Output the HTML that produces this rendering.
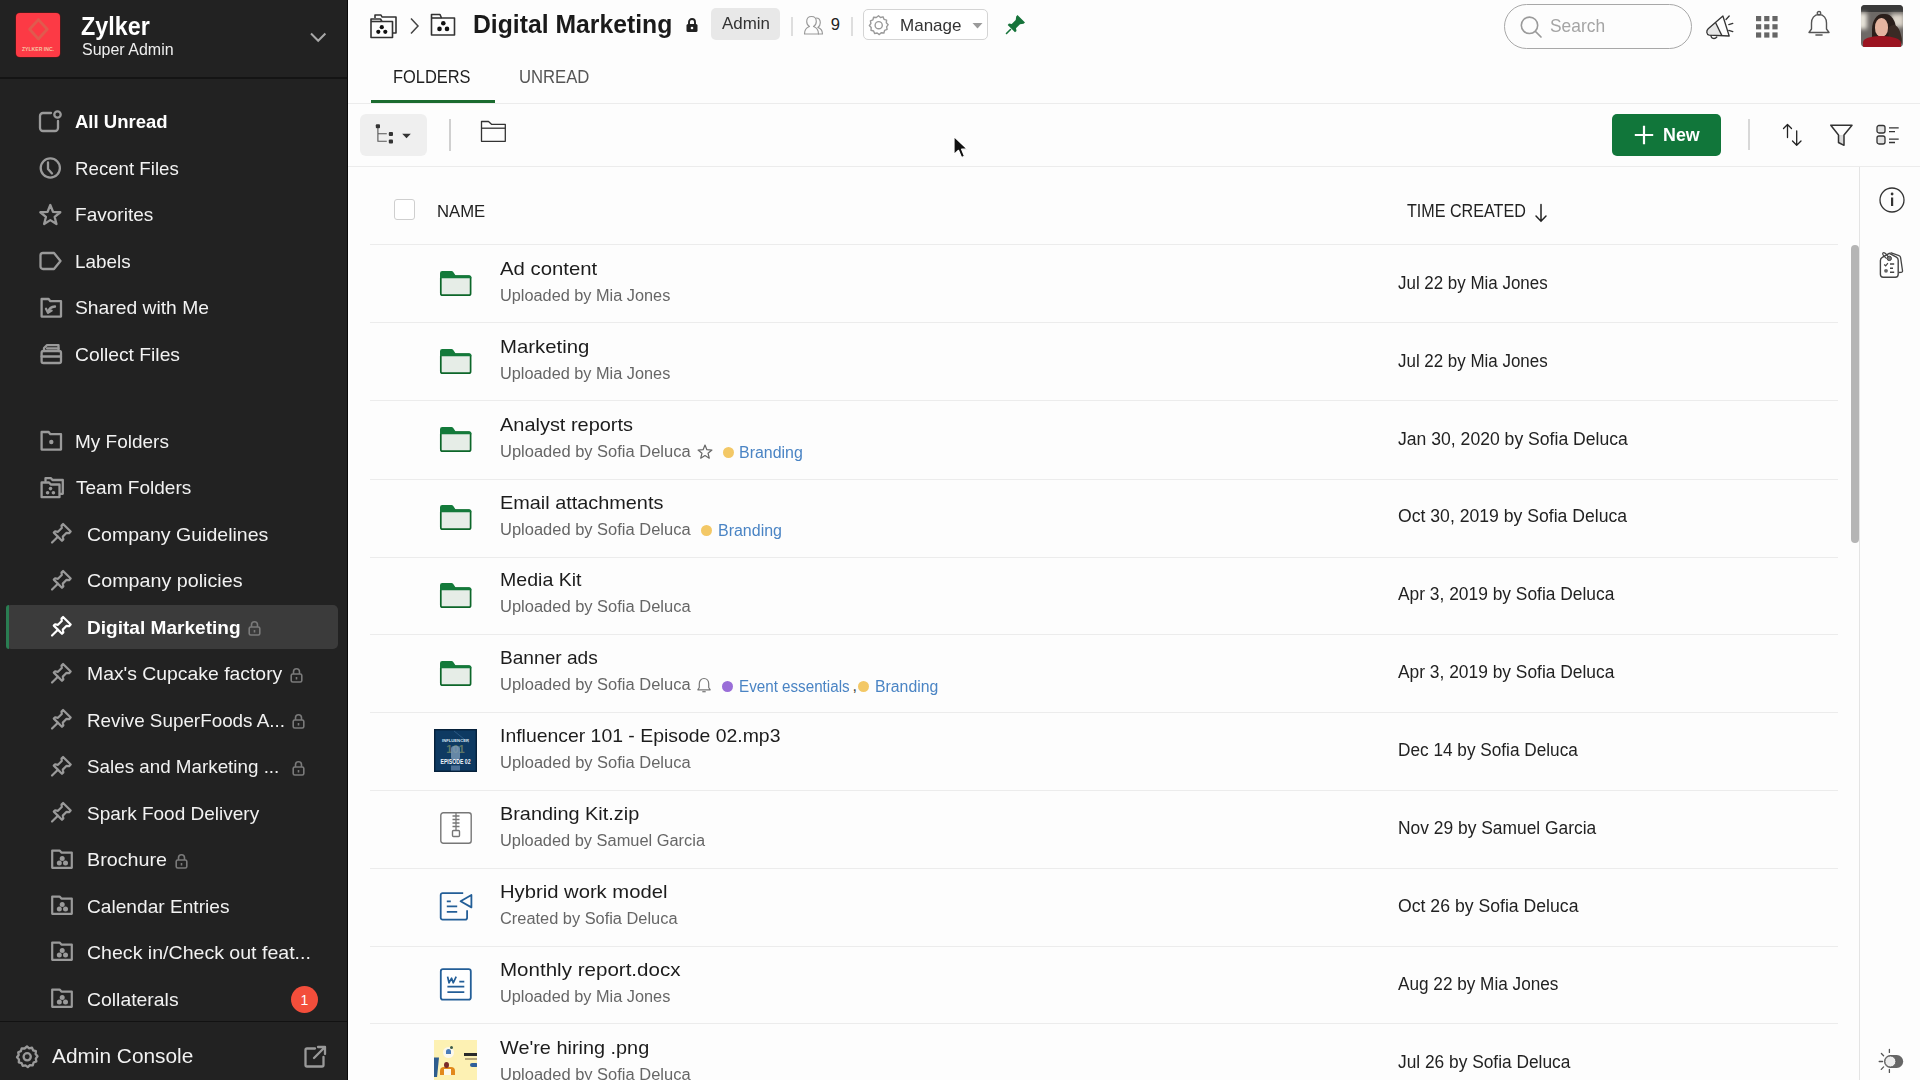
<!DOCTYPE html>
<html><head><meta charset="utf-8"><title>WorkDrive</title>
<style>
html,body{margin:0;padding:0;width:1920px;height:1080px;overflow:hidden;background:#fdfdfd;font-family:"Liberation Sans", sans-serif;}
.t{position:absolute;white-space:nowrap;line-height:1;font-family:"Liberation Sans", sans-serif;}
svg{overflow:visible}
</style></head><body>
<div style="position:absolute;left:0px;top:0px;width:347px;height:1080px;background:#222222"></div>
<div style="position:absolute;left:347px;top:0px;width:1px;height:1080px;background:#0a0a0a"></div>
<div style="position:absolute;left:16px;top:13px;width:44px;height:44px;background:#fc3a45;border-radius:4px;box-shadow:0 0 0 0.6px #6a1416"></div>
<svg style="position:absolute;left:16px;top:13px;" width="44" height="44" viewBox="0 0 44 44" fill="none"><path d="M22.4 6.6 L31.2 16.2 L22.4 26 L13.6 16.2 Z" stroke="#e05a4e" stroke-width="2.8" stroke-linejoin="round"/><text x="22" y="38" font-family="Liberation Sans" font-size="5.8" font-weight="700" fill="#f6c4a4" text-anchor="middle" textLength="32" lengthAdjust="spacingAndGlyphs">ZYLKER INC.</text></svg>
<div class="t" style="left:81.25px;top:13.65px;font-size:25px;font-weight:700;color:#ffffff;transform:scaleX(0.9330);transform-origin:0 0;">Zylker</div>
<div class="t" style="left:81.80px;top:41.77px;font-size:15.8px;font-weight:400;color:#eeeeee;transform:scaleX(1.0127);transform-origin:0 0;">Super Admin</div>
<svg style="position:absolute;left:307.5px;top:31px;" width="20" height="14" viewBox="0 0 20 14" fill="none"><path d="M3 2.5 L10.2 9.8 L17.4 2.5" stroke="#a8a8a8" stroke-width="2"/></svg>
<div style="position:absolute;left:0px;top:77px;width:347px;height:2px;background:#141414"></div>
<div style="position:absolute;left:6px;top:605px;width:332px;height:44px;background:#3b3b3b;border-radius:5px"></div>
<div style="position:absolute;left:6px;top:605px;width:3px;height:44px;background:#2a7d52;border-radius:5px 0 0 5px"></div>
<svg style="position:absolute;left:38px;top:110.30000000000001px;" width="26" height="24" viewBox="0 0 26 24" fill="none"><path d="M13 3 H5 a3 3 0 0 0 -3 3 V18 a3 3 0 0 0 3 3 H17 a3 3 0 0 0 3 -3 V11" stroke="#9a9a9a" stroke-width="2.3" stroke-linecap="round" stroke-linejoin="round"/><circle cx="19.5" cy="4.5" r="3.2" stroke="#9a9a9a" stroke-width="2.3" stroke-linecap="round" stroke-linejoin="round"/></svg>
<div class="t" style="left:75.40px;top:112.15px;font-size:19px;font-weight:700;color:#ffffff;transform:scaleX(0.9737);transform-origin:0 0;">All Unread</div>
<svg style="position:absolute;left:38px;top:156px;" width="26" height="24" viewBox="0 0 26 24" fill="none"><circle cx="12.3" cy="12" r="9.6" stroke="#9a9a9a" stroke-width="2.3" stroke-linecap="round" stroke-linejoin="round"/><path d="M10 6.5 V13 L14 17.5" stroke="#9a9a9a" stroke-width="2.3" stroke-linecap="round" stroke-linejoin="round"/></svg>
<div class="t" style="left:75.40px;top:158.85px;font-size:19px;font-weight:400;color:#f2f2f2;transform:scaleX(0.9830);transform-origin:0 0;">Recent Files</div>
<svg style="position:absolute;left:38px;top:202.5px;" width="26" height="24" viewBox="0 0 26 24" fill="none"><polygon points="12.30,2.00 15.00,8.78 22.29,9.26 16.67,13.92 18.47,20.99 12.30,17.10 6.13,20.99 7.93,13.92 2.31,9.26 9.60,8.78" stroke="#9a9a9a" stroke-width="2.3" stroke-linecap="round" stroke-linejoin="round"/></svg>
<div class="t" style="left:75.00px;top:205.35px;font-size:19px;font-weight:400;color:#f2f2f2;transform:scaleX(1.0021);transform-origin:0 0;">Favorites</div>
<svg style="position:absolute;left:38px;top:249px;" width="26" height="24" viewBox="0 0 26 24" fill="none"><path d="M5 4 H16 L22.5 12 L16 20 H5 a2.5 2.5 0 0 1 -2.5 -2.5 V6.5 A2.5 2.5 0 0 1 5 4 Z" stroke="#9a9a9a" stroke-width="2.3" stroke-linecap="round" stroke-linejoin="round"/></svg>
<div class="t" style="left:75.00px;top:251.85px;font-size:19px;font-weight:400;color:#f2f2f2;transform:scaleX(0.9928);transform-origin:0 0;">Labels</div>
<svg style="position:absolute;left:38.5px;top:295.5px;" width="26" height="24" viewBox="0 0 26 24" fill="none"><path d="M2.6 3 H9.6 L11.4 5.2 H22 V20.6 H2.6 Z" stroke="#9a9a9a" stroke-width="2.3" stroke-linecap="round" stroke-linejoin="round"/><path d="M16 10.5 C12 10.8 10 12.5 9.2 16" stroke="#9a9a9a" stroke-width="2.3" stroke-linecap="round" stroke-linejoin="round"/><path d="M7 12.8 L9 16.8 L12.6 14.6" stroke="#9a9a9a" stroke-width="2.3" stroke-linecap="round" stroke-linejoin="round"/></svg>
<div class="t" style="left:75.00px;top:298.35px;font-size:19px;font-weight:400;color:#f2f2f2;transform:scaleX(1.0144);transform-origin:0 0;">Shared with Me</div>
<svg style="position:absolute;left:38.5px;top:342px;" width="26" height="24" viewBox="0 0 26 24" fill="none"><rect x="2.6" y="9" width="19.4" height="12" rx="1.8" stroke="#9a9a9a" stroke-width="2.3" stroke-linecap="round" stroke-linejoin="round"/><path d="M2.6 14.5 H22" stroke="#9a9a9a" stroke-width="2.3" stroke-linecap="round" stroke-linejoin="round"/><path d="M5 9 V6 L8 3.2 H19.5 V9" stroke="#9a9a9a" stroke-width="2.3" stroke-linecap="round" stroke-linejoin="round"/><path d="M8 6.3 H19.5" stroke="#9a9a9a" stroke-width="2.3" stroke-linecap="round" stroke-linejoin="round"/></svg>
<div class="t" style="left:75.00px;top:344.85px;font-size:19px;font-weight:400;color:#f2f2f2;transform:scaleX(1.0149);transform-origin:0 0;">Collect Files</div>
<svg style="position:absolute;left:38.5px;top:429px;" width="26" height="24" viewBox="0 0 26 24" fill="none"><path d="M2.6 3 H9.6 L11.4 5.2 H22 V20.6 H2.6 Z" stroke="#9a9a9a" stroke-width="2.3" stroke-linecap="round" stroke-linejoin="round"/><circle cx="12.3" cy="13" r="2.2" fill="#9a9a9a"/></svg>
<div class="t" style="left:75.00px;top:431.85px;font-size:19px;font-weight:400;color:#f2f2f2;transform:scaleX(0.9994);transform-origin:0 0;">My Folders</div>
<svg style="position:absolute;left:38.5px;top:475.5px;" width="28" height="24" viewBox="0 0 28 24" fill="none"><path d="M6.5 5 V2.2 H12 L13.5 4 H23.8 V17.8 H21" stroke="#9a9a9a" stroke-width="2.3" stroke-linecap="round" stroke-linejoin="round"/><path d="M2.6 6.5 H10 L11.8 8.5 H20.5 V21.2 H2.6 Z" stroke="#9a9a9a" stroke-width="2.3" stroke-linecap="round" stroke-linejoin="round"/><circle cx="11.5" cy="12.6" r="1.8" fill="#9a9a9a"/><circle cx="8.6" cy="16.8" r="1.8" fill="#9a9a9a"/><circle cx="14.4" cy="16.8" r="1.8" fill="#9a9a9a"/></svg>
<div class="t" style="left:75.80px;top:478.35px;font-size:19px;font-weight:400;color:#f2f2f2;transform:scaleX(1.0018);transform-origin:0 0;">Team Folders</div>
<svg style="position:absolute;left:50px;top:522px;" width="24" height="24" viewBox="0 0 24 24" fill="none"><polygon points="3.79,10.61 5.14,9.26 7.96,9.83 11.78,6.01 11.50,3.46 13.06,1.91 20.69,9.54 19.14,11.10 16.59,10.82 12.77,14.64 13.34,17.46 11.99,18.81" stroke="#9a9a9a" stroke-width="2.2" stroke-linecap="round" stroke-linejoin="round"/><path d="M2.02 20.58 L7.89 14.71" stroke="#9a9a9a" stroke-width="2.2" stroke-linecap="round" stroke-linejoin="round"/></svg>
<div class="t" style="left:86.70px;top:524.85px;font-size:19px;font-weight:400;color:#f2f2f2;transform:scaleX(1.0280);transform-origin:0 0;">Company Guidelines</div>
<svg style="position:absolute;left:50px;top:568.5px;" width="24" height="24" viewBox="0 0 24 24" fill="none"><polygon points="3.79,10.61 5.14,9.26 7.96,9.83 11.78,6.01 11.50,3.46 13.06,1.91 20.69,9.54 19.14,11.10 16.59,10.82 12.77,14.64 13.34,17.46 11.99,18.81" stroke="#9a9a9a" stroke-width="2.2" stroke-linecap="round" stroke-linejoin="round"/><path d="M2.02 20.58 L7.89 14.71" stroke="#9a9a9a" stroke-width="2.2" stroke-linecap="round" stroke-linejoin="round"/></svg>
<div class="t" style="left:86.70px;top:571.35px;font-size:19px;font-weight:400;color:#f2f2f2;transform:scaleX(1.0370);transform-origin:0 0;">Company policies</div>
<svg style="position:absolute;left:50px;top:615.3px;" width="24" height="24" viewBox="0 0 24 24" fill="none"><polygon points="3.79,10.61 5.14,9.26 7.96,9.83 11.78,6.01 11.50,3.46 13.06,1.91 20.69,9.54 19.14,11.10 16.59,10.82 12.77,14.64 13.34,17.46 11.99,18.81" stroke="#ffffff" stroke-width="2.2" stroke-linecap="round" stroke-linejoin="round"/><path d="M2.02 20.58 L7.89 14.71" stroke="#ffffff" stroke-width="2.2" stroke-linecap="round" stroke-linejoin="round"/></svg>
<div class="t" style="left:86.70px;top:618.15px;font-size:19px;font-weight:700;color:#ffffff;transform:scaleX(1.0033);transform-origin:0 0;">Digital Marketing</div>
<svg style="position:absolute;left:50px;top:661.5px;" width="24" height="24" viewBox="0 0 24 24" fill="none"><polygon points="3.79,10.61 5.14,9.26 7.96,9.83 11.78,6.01 11.50,3.46 13.06,1.91 20.69,9.54 19.14,11.10 16.59,10.82 12.77,14.64 13.34,17.46 11.99,18.81" stroke="#9a9a9a" stroke-width="2.2" stroke-linecap="round" stroke-linejoin="round"/><path d="M2.02 20.58 L7.89 14.71" stroke="#9a9a9a" stroke-width="2.2" stroke-linecap="round" stroke-linejoin="round"/></svg>
<div class="t" style="left:86.70px;top:664.35px;font-size:19px;font-weight:400;color:#f2f2f2;transform:scaleX(1.0192);transform-origin:0 0;">Max's Cupcake factory</div>
<svg style="position:absolute;left:50px;top:708px;" width="24" height="24" viewBox="0 0 24 24" fill="none"><polygon points="3.79,10.61 5.14,9.26 7.96,9.83 11.78,6.01 11.50,3.46 13.06,1.91 20.69,9.54 19.14,11.10 16.59,10.82 12.77,14.64 13.34,17.46 11.99,18.81" stroke="#9a9a9a" stroke-width="2.2" stroke-linecap="round" stroke-linejoin="round"/><path d="M2.02 20.58 L7.89 14.71" stroke="#9a9a9a" stroke-width="2.2" stroke-linecap="round" stroke-linejoin="round"/></svg>
<div class="t" style="left:86.70px;top:710.85px;font-size:19px;font-weight:400;color:#f2f2f2;transform:scaleX(0.9920);transform-origin:0 0;">Revive SuperFoods A...</div>
<svg style="position:absolute;left:50px;top:754.5px;" width="24" height="24" viewBox="0 0 24 24" fill="none"><polygon points="3.79,10.61 5.14,9.26 7.96,9.83 11.78,6.01 11.50,3.46 13.06,1.91 20.69,9.54 19.14,11.10 16.59,10.82 12.77,14.64 13.34,17.46 11.99,18.81" stroke="#9a9a9a" stroke-width="2.2" stroke-linecap="round" stroke-linejoin="round"/><path d="M2.02 20.58 L7.89 14.71" stroke="#9a9a9a" stroke-width="2.2" stroke-linecap="round" stroke-linejoin="round"/></svg>
<div class="t" style="left:86.70px;top:757.35px;font-size:19px;font-weight:400;color:#f2f2f2;transform:scaleX(0.9896);transform-origin:0 0;">Sales and Marketing ...</div>
<svg style="position:absolute;left:50px;top:801px;" width="24" height="24" viewBox="0 0 24 24" fill="none"><polygon points="3.79,10.61 5.14,9.26 7.96,9.83 11.78,6.01 11.50,3.46 13.06,1.91 20.69,9.54 19.14,11.10 16.59,10.82 12.77,14.64 13.34,17.46 11.99,18.81" stroke="#9a9a9a" stroke-width="2.2" stroke-linecap="round" stroke-linejoin="round"/><path d="M2.02 20.58 L7.89 14.71" stroke="#9a9a9a" stroke-width="2.2" stroke-linecap="round" stroke-linejoin="round"/></svg>
<div class="t" style="left:86.70px;top:803.85px;font-size:19px;font-weight:400;color:#f2f2f2;transform:scaleX(1.0003);transform-origin:0 0;">Spark Food Delivery</div>
<svg style="position:absolute;left:50px;top:847.5px;" width="26" height="24" viewBox="0 0 26 24" fill="none"><path d="M2.2 2.6 H9.6 L11.4 4.6 H21.8 V19.8 H2.2 Z" stroke="#9a9a9a" stroke-width="2.2" stroke-linejoin="round"/><circle cx="12.2" cy="10.4" r="2.5" fill="#9a9a9a"/><circle cx="9.3" cy="15" r="2.5" fill="#9a9a9a"/><circle cx="15.5" cy="15" r="2.5" fill="#9a9a9a"/></svg>
<div class="t" style="left:86.70px;top:850.35px;font-size:19px;font-weight:400;color:#f2f2f2;transform:scaleX(1.0377);transform-origin:0 0;">Brochure</div>
<svg style="position:absolute;left:50px;top:894px;" width="26" height="24" viewBox="0 0 26 24" fill="none"><path d="M2.2 2.6 H9.6 L11.4 4.6 H21.8 V19.8 H2.2 Z" stroke="#9a9a9a" stroke-width="2.2" stroke-linejoin="round"/><circle cx="12.2" cy="10.4" r="2.5" fill="#9a9a9a"/><circle cx="9.3" cy="15" r="2.5" fill="#9a9a9a"/><circle cx="15.5" cy="15" r="2.5" fill="#9a9a9a"/></svg>
<div class="t" style="left:86.70px;top:896.85px;font-size:19px;font-weight:400;color:#f2f2f2;transform:scaleX(1.0070);transform-origin:0 0;">Calendar Entries</div>
<svg style="position:absolute;left:50px;top:940.4px;" width="26" height="24" viewBox="0 0 26 24" fill="none"><path d="M2.2 2.6 H9.6 L11.4 4.6 H21.8 V19.8 H2.2 Z" stroke="#9a9a9a" stroke-width="2.2" stroke-linejoin="round"/><circle cx="12.2" cy="10.4" r="2.5" fill="#9a9a9a"/><circle cx="9.3" cy="15" r="2.5" fill="#9a9a9a"/><circle cx="15.5" cy="15" r="2.5" fill="#9a9a9a"/></svg>
<div class="t" style="left:86.70px;top:943.25px;font-size:19px;font-weight:400;color:#f2f2f2;transform:scaleX(1.0292);transform-origin:0 0;">Check in/Check out feat...</div>
<svg style="position:absolute;left:50px;top:986.7px;" width="26" height="24" viewBox="0 0 26 24" fill="none"><path d="M2.2 2.6 H9.6 L11.4 4.6 H21.8 V19.8 H2.2 Z" stroke="#9a9a9a" stroke-width="2.2" stroke-linejoin="round"/><circle cx="12.2" cy="10.4" r="2.5" fill="#9a9a9a"/><circle cx="9.3" cy="15" r="2.5" fill="#9a9a9a"/><circle cx="15.5" cy="15" r="2.5" fill="#9a9a9a"/></svg>
<div class="t" style="left:86.70px;top:989.55px;font-size:19px;font-weight:400;color:#f2f2f2;transform:scaleX(1.0203);transform-origin:0 0;">Collaterals</div>
<svg style="position:absolute;left:248px;top:619.5px;" width="13" height="16" viewBox="0 0 13 16" fill="none"><path d="M3.5 7 V4.8 a3 3 0 0 1 6 0 V7" stroke="#7a7a7a" stroke-width="1.6"/><rect x="1.2" y="7" width="10.6" height="8" rx="1.6" stroke="#7a7a7a" stroke-width="1.6"/><path d="M6.5 10 V12.5" stroke="#7a7a7a" stroke-width="1.6"/></svg>
<svg style="position:absolute;left:289.5px;top:666.5px;" width="13" height="16" viewBox="0 0 13 16" fill="none"><path d="M3.5 7 V4.8 a3 3 0 0 1 6 0 V7" stroke="#7a7a7a" stroke-width="1.6"/><rect x="1.2" y="7" width="10.6" height="8" rx="1.6" stroke="#7a7a7a" stroke-width="1.6"/><path d="M6.5 10 V12.5" stroke="#7a7a7a" stroke-width="1.6"/></svg>
<svg style="position:absolute;left:292px;top:713px;" width="13" height="16" viewBox="0 0 13 16" fill="none"><path d="M3.5 7 V4.8 a3 3 0 0 1 6 0 V7" stroke="#7a7a7a" stroke-width="1.6"/><rect x="1.2" y="7" width="10.6" height="8" rx="1.6" stroke="#7a7a7a" stroke-width="1.6"/><path d="M6.5 10 V12.5" stroke="#7a7a7a" stroke-width="1.6"/></svg>
<svg style="position:absolute;left:292px;top:759.5px;" width="13" height="16" viewBox="0 0 13 16" fill="none"><path d="M3.5 7 V4.8 a3 3 0 0 1 6 0 V7" stroke="#7a7a7a" stroke-width="1.6"/><rect x="1.2" y="7" width="10.6" height="8" rx="1.6" stroke="#7a7a7a" stroke-width="1.6"/><path d="M6.5 10 V12.5" stroke="#7a7a7a" stroke-width="1.6"/></svg>
<svg style="position:absolute;left:174.5px;top:852.5px;" width="13" height="16" viewBox="0 0 13 16" fill="none"><path d="M3.5 7 V4.8 a3 3 0 0 1 6 0 V7" stroke="#7a7a7a" stroke-width="1.6"/><rect x="1.2" y="7" width="10.6" height="8" rx="1.6" stroke="#7a7a7a" stroke-width="1.6"/><path d="M6.5 10 V12.5" stroke="#7a7a7a" stroke-width="1.6"/></svg>
<div style="position:absolute;left:291px;top:986px;width:27px;height:27px;background:#f34e3b;border-radius:50%"></div>
<div class="t" style="left:304.50px;top:993.10px;font-size:14px;font-weight:400;color:#ffffff;transform:translateX(-50%)">1</div>
<div style="position:absolute;left:0px;top:1021px;width:347px;height:1px;background:#121212"></div>
<svg style="position:absolute;left:14px;top:1044px;" width="26" height="26" viewBox="0 0 26 26" fill="none"><path d="M13 2.5 L15.2 4.3 L18 3.6 L19.1 6.3 L21.9 7.2 L21.6 10.1 L23.5 12.3 L21.8 14.6 L22.3 17.4 L19.6 18.5 L18.8 21.3 L15.9 21.1 L13.8 23.1 L11.5 21.4 L8.7 21.9 L7.6 19.2 L4.8 18.4 L5 15.5 L3 13.3 L4.7 11 L4.2 8.2 L6.9 7.1 L7.7 4.3 L10.6 4.5 Z" stroke="#9a9a9a" stroke-width="2.3" stroke-linecap="round" stroke-linejoin="round"/><circle cx="13.2" cy="12.8" r="3.6" stroke="#9a9a9a" stroke-width="2.3" stroke-linecap="round" stroke-linejoin="round"/></svg>
<div class="t" style="left:52.30px;top:1046.17px;font-size:20.5px;font-weight:400;color:#f2f2f2;transform:scaleX(1.0162);transform-origin:0 0;">Admin Console</div>
<svg style="position:absolute;left:302px;top:1044px;" width="26" height="26" viewBox="0 0 26 26" fill="none"><path d="M13 4.5 H5 a1.5 1.5 0 0 0 -1.5 1.5 V21 a1.5 1.5 0 0 0 1.5 1.5 H20 a1.5 1.5 0 0 0 1.5 -1.5 V13" stroke="#9a9a9a" stroke-width="2.3" stroke-linecap="round" stroke-linejoin="round"/><path d="M12 14 L23 3 M16 3 H23 V10" stroke="#9a9a9a" stroke-width="2.3" stroke-linecap="round" stroke-linejoin="round"/></svg>
<svg style="position:absolute;left:369px;top:13px;" width="30" height="27" viewBox="0 0 30 27" fill="none"><path d="M6 5 V2 H12 L13 4 H27 V20 H24" stroke="#333" stroke-width="1.6" stroke-linejoin="round"/><path d="M2 6 H11.5 L13 8.5 H23.5 V24.5 H2 Z" stroke="#333" stroke-width="1.6" stroke-linejoin="round"/><path d="M2 8.5 H12.5" stroke="#333" stroke-width="1.6" stroke-linejoin="round"/><circle cx="12.8" cy="14.2" r="2.1" fill="#111"/><circle cx="9.3" cy="18.8" r="2.1" fill="#111"/><circle cx="16.3" cy="18.8" r="2.1" fill="#111"/></svg>
<svg style="position:absolute;left:406px;top:15px;" width="16" height="22" viewBox="0 0 16 22" fill="none"><path d="M5 3.5 L12 11 L5 18.5" stroke="#444" stroke-width="1.5" fill="none"/></svg>
<svg style="position:absolute;left:429px;top:12px;" width="28" height="26" viewBox="0 0 28 26" fill="none"><path d="M2.5 2.5 V23 H25.5 V6 H12.5 L11 2.5 Z" stroke="#333" stroke-width="1.6" stroke-linejoin="round"/><path d="M2.5 6 H12.5" stroke="#333" stroke-width="1.6" stroke-linejoin="round"/><circle cx="14.3" cy="11.3" r="2.3" fill="#111"/><circle cx="10.5" cy="16.9" r="2.3" fill="#111"/><circle cx="18" cy="16.9" r="2.3" fill="#111"/></svg>
<div class="t" style="left:473.30px;top:12.05px;font-size:25px;font-weight:700;color:#1a1a1a;transform:scaleX(0.9894);transform-origin:0 0;">Digital Marketing</div>
<svg style="position:absolute;left:685px;top:17px;" width="14" height="16" viewBox="0 0 14 16" fill="none"><path d="M4 7 V5 a3 3 0 0 1 6 0 V7" stroke="#222" stroke-width="1.9" fill="none"/><rect x="1.5" y="7" width="11" height="8" rx="1.5" fill="#222"/><circle cx="7" cy="11" r="1.3" fill="#fff"/></svg>
<div style="position:absolute;left:711px;top:8px;width:69px;height:32px;background:#e8e8e8;border-radius:5px"></div>
<div class="t" style="left:722.00px;top:15.16px;font-size:16.4px;font-weight:400;color:#333;transform:scaleX(1.0324);transform-origin:0 0;">Admin</div>
<div style="position:absolute;left:791px;top:17px;width:1.5px;height:19px;background:#dedede"></div>
<svg style="position:absolute;left:802px;top:14px;" width="24" height="22" viewBox="0 0 24 22" fill="none"><path d="M11 20 H2.5 c0-4 2-6.5 5-7.5 c-1.8-1-2.8-2.8-2.8-5 c0-3 2-5 4.8-5 c2.8 0 4.8 2 4.8 5 c0 2.2-1 4-2.8 5 c3 1 5 3.5 5 7.5 Z" stroke="#999" stroke-width="1.15" fill="none" stroke-linejoin="round"/><path d="M14 4 c2.5 0 4.3 2 4.3 4.8 c0 2-0.9 3.6-2.4 4.6 c2.7 1 4.6 3.4 4.6 6.6 H16" stroke="#999" stroke-width="1.15" fill="none" stroke-linejoin="round"/></svg>
<div class="t" style="left:830.70px;top:17.49px;font-size:16.6px;font-weight:400;color:#222;">9</div>
<div style="position:absolute;left:851px;top:17px;width:1.5px;height:19px;background:#dedede"></div>
<div style="position:absolute;left:863px;top:9px;width:125px;height:31px;border:1px solid #d4d4d4;border-radius:5px;box-sizing:border-box;background:#fff"></div>
<svg style="position:absolute;left:867px;top:14px;" width="23" height="23" viewBox="0 0 23 23" fill="none"><path d="M11.5 1.8 L13.5 3.5 L16 2.8 L17 5.3 L19.6 6.1 L19.3 8.7 L21.2 10.7 L19.6 12.8 L20.1 15.4 L17.6 16.4 L16.9 19 L14.2 18.8 L12.3 20.6 L10.2 19 L7.6 19.5 L6.6 17 L4 16.3 L4.2 13.6 L2.3 11.6 L3.9 9.5 L3.4 6.9 L5.9 5.9 L6.6 3.3 L9.3 3.5 Z" stroke="#9a9a9a" stroke-width="1.4" fill="none" stroke-linejoin="round"/><circle cx="11.7" cy="11.2" r="3.6" stroke="#9a9a9a" stroke-width="1.4"/></svg>
<div class="t" style="left:899.70px;top:16.55px;font-size:17px;font-weight:400;color:#333;transform:scaleX(1.0007);transform-origin:0 0;">Manage</div>
<svg style="position:absolute;left:971px;top:22px;" width="13" height="8" viewBox="0 0 13 8" fill="none"><path d="M1.5 1 H11.5 L6.5 6.5 Z" fill="#9a9a9a"/></svg>
<svg style="position:absolute;left:1005px;top:14px;" width="21" height="20" viewBox="0 0 21 20" fill="none"><path d="M12.5 1 L20 8.5 L18.5 9.8 L15 10.3 L11 14.3 L11.5 17 L10 18.3 L2.7 11 L4 9.5 L6.7 10 L10.7 6 L11.2 2.5 Z" fill="#16733a"/><path d="M5.5 15.5 L1.5 19.5" stroke="#16733a" stroke-width="1.6" stroke-linecap="round"/></svg>
<div style="position:absolute;left:1504px;top:3.5px;width:187.5px;height:45px;border:1.4px solid #a8a8a8;border-radius:23px;box-sizing:border-box"></div>
<svg style="position:absolute;left:1518px;top:15px;" width="26" height="24" viewBox="0 0 26 24" fill="none"><circle cx="11.5" cy="10.3" r="8.2" stroke="#9a9a9a" stroke-width="1.6"/><path d="M17.5 16.5 L23 22" stroke="#9a9a9a" stroke-width="1.7" stroke-linecap="round"/></svg>
<div class="t" style="left:1550.30px;top:16.93px;font-size:18.2px;font-weight:400;color:#a5a5a5;transform:scaleX(0.9558);transform-origin:0 0;">Search</div>
<svg style="position:absolute;left:1704px;top:12px;" width="32" height="30" viewBox="0 0 32 30" fill="none"><path d="M11.5 10.5 L4.2 16.8 C2 18.8 2.4 22.6 5.2 23.2 L17.9 23.6 Z" fill="#e6e6e6"/><path d="M18.9 4 L4.2 16.8 C2 18.8 2.4 22.6 5.2 23.2 L25.2 24 Z" stroke="#333" stroke-width="1.3" fill="none" stroke-linejoin="round"/><path d="M11.5 10.5 L17.9 23.6" stroke="#333" stroke-width="1.3"/><path d="M7 23.4 C6.8 26.6 10.8 27.6 12.8 25 " stroke="#333" stroke-width="1.3" fill="none" stroke-linecap="round"/><path d="M22 7.5 L25.2 4 M24.8 12.6 L28.8 11.4 M24.8 18.4 L28.8 19.6" stroke="#333" stroke-width="1.3" stroke-linecap="round"/></svg>
<svg style="position:absolute;left:1756px;top:16px;" width="22" height="22" viewBox="0 0 22 22" fill="none"><rect x="0.0" y="0.0" width="5.2" height="5.2" fill="#666"/><rect x="8.2" y="0.0" width="5.2" height="5.2" fill="#666"/><rect x="16.4" y="0.0" width="5.2" height="5.2" fill="#666"/><rect x="0.0" y="8.2" width="5.2" height="5.2" fill="#666"/><rect x="8.2" y="8.2" width="5.2" height="5.2" fill="#666"/><rect x="16.4" y="8.2" width="5.2" height="5.2" fill="#666"/><rect x="0.0" y="16.4" width="5.2" height="5.2" fill="#666"/><rect x="8.2" y="16.4" width="5.2" height="5.2" fill="#666"/><rect x="16.4" y="16.4" width="5.2" height="5.2" fill="#666"/></svg>
<svg style="position:absolute;left:1806px;top:10px;" width="26" height="27" viewBox="0 0 26 27" fill="none"><path d="M13 4.5 C8 4.5 5.5 8.5 5.5 13 V19 L3 22.5 H23 L20.5 19 V13 C20.5 8.5 18 4.5 13 4.5 Z" stroke="#555" stroke-width="1.4" fill="none" stroke-linejoin="round"/><circle cx="13" cy="3.3" r="1.8" stroke="#555" stroke-width="1.3" fill="none"/><path d="M10 25 H16" stroke="#555" stroke-width="1.6" stroke-linecap="round"/></svg>
<div style="position:absolute;left:1861px;top:5px;width:42px;height:42px;border-radius:4px;overflow:hidden;background:#6d6966"><div style="position:absolute;left:0;top:0;width:42px;height:7px;background:#3a3a3a"></div><div style="position:absolute;left:-3px;top:8px;width:9px;height:16px;background:#e9e6dc;filter:blur(2px)"></div><div style="position:absolute;left:30px;top:9px;width:13px;height:13px;background:#ded7cc;filter:blur(2px)"></div><div style="position:absolute;left:11px;top:9px;width:24px;height:34px;background:#2a1e1a;border-radius:45% 45% 30% 30%"></div><div style="position:absolute;left:28px;top:20px;width:12px;height:22px;background:#3a2a24;transform:rotate(-15deg);border-radius:40%"></div><div style="position:absolute;left:14px;top:13px;width:13px;height:19px;background:#e4b4a0;border-radius:48%"></div><div style="position:absolute;left:2px;top:31px;width:38px;height:14px;background:#9b1420;border-radius:45% 50% 0 0"></div></div>
<div class="t" style="left:392.60px;top:67.90px;font-size:18px;font-weight:400;color:#1e1e1e;transform:scaleX(0.9117);transform-origin:0 0;">FOLDERS</div>
<div class="t" style="left:518.60px;top:67.90px;font-size:18px;font-weight:400;color:#555;transform:scaleX(0.9263);transform-origin:0 0;">UNREAD</div>
<div style="position:absolute;left:348px;top:103px;width:1572px;height:1px;background:#ececec"></div>
<div style="position:absolute;left:370.5px;top:100px;width:124.5px;height:3px;background:#1b6b2f"></div>
<div style="position:absolute;left:360px;top:114px;width:67px;height:42px;background:#efefef;border-radius:6px"></div>
<svg style="position:absolute;left:374px;top:122px;" width="40" height="24" viewBox="0 0 40 24" fill="none"><rect x="1.8" y="2.2" width="4.2" height="4" rx="1" fill="#333"/><path d="M3.9 6 V19.3 H12.8 M3.9 11.8 H12.8" stroke="#555" stroke-width="1.1" fill="none"/><rect x="14.8" y="10" width="4.2" height="3.9" rx="1" fill="#333"/><rect x="14.8" y="17.5" width="4.2" height="3.9" rx="1" fill="#333"/><path d="M28.2 11.8 H36.8 L32.5 16.3 Z" fill="#333"/></svg>
<div style="position:absolute;left:448.5px;top:119px;width:2px;height:31.5px;background:#d0d0d0"></div>
<svg style="position:absolute;left:479px;top:119px;" width="30" height="25" viewBox="0 0 30 25" fill="none"><path d="M2.5 2.5 H9.5 L12.5 5.3 H26.3 V22.3 H2.5 Z" stroke="#333" stroke-width="1.3" fill="none" stroke-linejoin="round"/><path d="M2.5 9.2 H26.3" stroke="#333" stroke-width="1.3"/></svg>
<div style="position:absolute;left:1612px;top:114px;width:109px;height:42px;background:#11763a;border-radius:5px"></div>
<svg style="position:absolute;left:1633px;top:124px;" width="22" height="22" viewBox="0 0 22 22" fill="none"><path d="M11 1.8 V20.2 M1.8 11 H20.2" stroke="#fff" stroke-width="2.2"/></svg>
<div class="t" style="left:1662.50px;top:125.50px;font-size:18px;font-weight:700;color:#ffffff;transform:scaleX(0.9910);transform-origin:0 0;">New</div>
<div style="position:absolute;left:1747.5px;top:119px;width:2px;height:31px;background:#d8d8d8"></div>
<svg style="position:absolute;left:1781px;top:122px;" width="24" height="26" viewBox="0 0 24 26" fill="none"><path d="M6.5 15.5 V2.5 M2.5 6.5 L6.5 2.5 L10.5 6.5" stroke="#222" stroke-width="1.3" fill="none" stroke-linecap="round" stroke-linejoin="round"/><path d="M15.7 8.8 V23 M11.5 19 L15.7 23.2 L20 19" stroke="#222" stroke-width="1.3" fill="none" stroke-linecap="round" stroke-linejoin="round"/></svg>
<svg style="position:absolute;left:1829px;top:123px;" width="25" height="24" viewBox="0 0 25 24" fill="none"><path d="M9.5 12 V21 L15 22 V12 Z" fill="#dadada"/><path d="M1.8 2.2 H23 L15 12 V22.3 L9.5 19.5 V12 Z" stroke="#333" stroke-width="1.5" fill="none" stroke-linejoin="round"/></svg>
<svg style="position:absolute;left:1875px;top:123px;" width="26" height="24" viewBox="0 0 26 24" fill="none"><rect x="2" y="2.5" width="8" height="7.5" rx="2" fill="#e3e3e3" stroke="#333" stroke-width="1.3"/><rect x="2" y="13" width="8" height="8" rx="2" fill="#e3e3e3" stroke="#333" stroke-width="1.3"/><path d="M14 4.8 H23.7 M14 8.7 H20 M14 16.2 H23.7 M14 19.5 H20" stroke="#333" stroke-width="1.3"/></svg>
<div style="position:absolute;left:348px;top:166px;width:1572px;height:1px;background:#ececec"></div>
<div style="position:absolute;left:1859px;top:167px;width:1px;height:913px;background:#e4e4e4"></div>
<svg style="position:absolute;left:1878px;top:186px;" width="28" height="28" viewBox="0 0 28 28" fill="none"><circle cx="14" cy="14" r="12" stroke="#333" stroke-width="1.3"/><rect x="13" y="11.5" width="2.2" height="8.5" fill="#333"/><circle cx="14.1" cy="8" r="1.4" fill="#333"/></svg>
<svg style="position:absolute;left:1877px;top:248px;" width="30" height="32" viewBox="0 0 30 32" fill="none"><path d="M13.5 4.6 L22 7.6 Q23.4 8.1 23.6 9.6 L25.5 22.6 Q25.7 24.3 24 24.4 L21.6 24.5" stroke="#444" stroke-width="1.3" fill="none"/><path d="M3.4 12.6 Q3.4 10.3 5.3 9.3 L12.3 5.3 L19.4 9.1 Q21.2 10.1 21.2 12.2 V26.3 Q21.2 29.2 18.4 29.2 H6.2 Q3.4 29.2 3.4 26.3 Z" stroke="#444" stroke-width="1.4" fill="#fff"/><path d="M11.6 9.2 Q7.6 3.6 5.9 5 Q4.8 6.6 9.6 10.6" stroke="#444" stroke-width="1.2" fill="none"/><circle cx="12.3" cy="10.4" r="2.2" fill="#777" stroke="#444" stroke-width="1"/><path d="M7.2 16.4 L8.7 17.8 L10.9 15.2" stroke="#444" stroke-width="1.3" fill="none"/><path d="M13 16 H17.2 M13 20.2 H16 M13 24.2 H17.2" stroke="#444" stroke-width="1.4"/><circle cx="9" cy="22.8" r="1.9" fill="#666"/></svg>
<svg style="position:absolute;left:1876px;top:1046px;" width="32" height="30" viewBox="0 0 32 30" fill="none"><path d="M13.4 3.4 V6.4 M13.4 23.4 V26.4 M3.2 15.5 H6.6 M5.4 7.5 L7.6 9.7 M7.6 20.9 L5.3 23.4" stroke="#555" stroke-width="1.3" stroke-linecap="round"/><rect x="8" y="9" width="19.2" height="12.9" rx="6.45" fill="#666"/><circle cx="14.4" cy="15.45" r="5.5" fill="#ececec" stroke="#555" stroke-width="0.9"/></svg>
<div style="position:absolute;left:394px;top:199px;width:21px;height:21px;border:1.3px solid #cfcfcf;border-radius:3px;box-sizing:border-box;background:#fff"></div>
<div class="t" style="left:437.00px;top:203.01px;font-size:17.4px;font-weight:400;color:#222;transform:scaleX(0.9605);transform-origin:0 0;">NAME</div>
<div class="t" style="left:1407.00px;top:202.84px;font-size:17.6px;font-weight:400;color:#222;transform:scaleX(0.9159);transform-origin:0 0;">TIME CREATED</div>
<svg style="position:absolute;left:1533px;top:202.5px;" width="16" height="20" viewBox="0 0 16 20" fill="none"><path d="M8 1.5 V18 M3 13 L8 18.2 L13 13" stroke="#222" stroke-width="1.5" fill="none" stroke-linecap="round"/></svg>
<div style="position:absolute;left:370px;top:244px;width:1468px;height:1px;background:#ececec"></div>
<div style="position:absolute;left:1851px;top:245px;width:8px;height:298px;background:#b5b5b5;border-radius:4px"></div>
<svg style="position:absolute;left:438.5px;top:270.0px;" width="34" height="28" viewBox="0 0 34 28" fill="none"><rect x="1.8" y="6.2" width="29.8" height="19" rx="1.8" fill="#e6ede7" stroke="#0c6629" stroke-width="1.7"/><path d="M1 8.2 V3.2 a2.2 2.2 0 0 1 2.2 -2.2 H12.5 a2 2 0 0 1 1.6 .8 L16.6 5.4 H30.4 a2 2 0 0 1 2 2 V8.2 Z" fill="#137a3a"/></svg>
<div class="t" style="left:499.70px;top:259.86px;font-size:18.4px;font-weight:400;color:#1c1c1c;transform:scaleX(1.1046);transform-origin:0 0;">Ad content</div>
<div class="t" style="left:499.70px;top:287.80px;font-size:16px;font-weight:400;color:#666;transform:scaleX(1.0185);transform-origin:0 0;">Uploaded by Mia Jones</div>
<div class="t" style="left:1398.10px;top:274.73px;font-size:17.5px;font-weight:400;color:#222;transform:scaleX(0.9673);transform-origin:0 0;">Jul 22 by Mia Jones</div>
<div style="position:absolute;left:370px;top:322px;width:1468px;height:1px;background:#ececec"></div>
<svg style="position:absolute;left:438.5px;top:347.9px;" width="34" height="28" viewBox="0 0 34 28" fill="none"><rect x="1.8" y="6.2" width="29.8" height="19" rx="1.8" fill="#e6ede7" stroke="#0c6629" stroke-width="1.7"/><path d="M1 8.2 V3.2 a2.2 2.2 0 0 1 2.2 -2.2 H12.5 a2 2 0 0 1 1.6 .8 L16.6 5.4 H30.4 a2 2 0 0 1 2 2 V8.2 Z" fill="#137a3a"/></svg>
<div class="t" style="left:499.70px;top:337.76px;font-size:18.4px;font-weight:400;color:#1c1c1c;transform:scaleX(1.1055);transform-origin:0 0;">Marketing</div>
<div class="t" style="left:499.70px;top:365.70px;font-size:16px;font-weight:400;color:#666;transform:scaleX(1.0185);transform-origin:0 0;">Uploaded by Mia Jones</div>
<div class="t" style="left:1398.10px;top:352.62px;font-size:17.5px;font-weight:400;color:#222;transform:scaleX(0.9673);transform-origin:0 0;">Jul 22 by Mia Jones</div>
<div style="position:absolute;left:370px;top:400px;width:1468px;height:1px;background:#ececec"></div>
<svg style="position:absolute;left:438.5px;top:425.8px;" width="34" height="28" viewBox="0 0 34 28" fill="none"><rect x="1.8" y="6.2" width="29.8" height="19" rx="1.8" fill="#e6ede7" stroke="#0c6629" stroke-width="1.7"/><path d="M1 8.2 V3.2 a2.2 2.2 0 0 1 2.2 -2.2 H12.5 a2 2 0 0 1 1.6 .8 L16.6 5.4 H30.4 a2 2 0 0 1 2 2 V8.2 Z" fill="#137a3a"/></svg>
<div class="t" style="left:499.70px;top:415.66px;font-size:18.4px;font-weight:400;color:#1c1c1c;transform:scaleX(1.0845);transform-origin:0 0;">Analyst reports</div>
<div class="t" style="left:499.70px;top:443.60px;font-size:16px;font-weight:400;color:#666;transform:scaleX(1.0300);transform-origin:0 0;">Uploaded by Sofia Deluca</div>
<div class="t" style="left:1398.10px;top:430.53px;font-size:17.5px;font-weight:400;color:#222;transform:scaleX(1.0053);transform-origin:0 0;">Jan 30, 2020 by Sofia Deluca</div>
<svg style="position:absolute;left:696.5px;top:444.4px;" width="16" height="16" viewBox="0 0 16 16" fill="none"><polygon points="8.00,1.00 9.88,5.71 14.94,6.04 11.04,9.29 12.29,14.21 8.00,11.50 3.71,14.21 4.96,9.29 1.06,6.04 6.12,5.71" stroke="#666" stroke-width="1.2" stroke-linejoin="round"/></svg>
<div style="position:absolute;left:722.5px;top:446.9px;width:11px;height:11px;border-radius:50%;background:#f3c866"></div>
<div class="t" style="left:739.00px;top:444.94px;font-size:15.6px;font-weight:400;color:#4a84c4;transform:scaleX(1.0218);transform-origin:0 0;">Branding</div>
<div style="position:absolute;left:370px;top:479px;width:1468px;height:1px;background:#ececec"></div>
<svg style="position:absolute;left:438.5px;top:503.70000000000005px;" width="34" height="28" viewBox="0 0 34 28" fill="none"><rect x="1.8" y="6.2" width="29.8" height="19" rx="1.8" fill="#e6ede7" stroke="#0c6629" stroke-width="1.7"/><path d="M1 8.2 V3.2 a2.2 2.2 0 0 1 2.2 -2.2 H12.5 a2 2 0 0 1 1.6 .8 L16.6 5.4 H30.4 a2 2 0 0 1 2 2 V8.2 Z" fill="#137a3a"/></svg>
<div class="t" style="left:499.70px;top:493.56px;font-size:18.4px;font-weight:400;color:#1c1c1c;transform:scaleX(1.0797);transform-origin:0 0;">Email attachments</div>
<div class="t" style="left:499.70px;top:521.50px;font-size:16px;font-weight:400;color:#666;transform:scaleX(1.0300);transform-origin:0 0;">Uploaded by Sofia Deluca</div>
<div class="t" style="left:1398.10px;top:508.43px;font-size:17.5px;font-weight:400;color:#222;transform:scaleX(1.0063);transform-origin:0 0;">Oct 30, 2019 by Sofia Deluca</div>
<div style="position:absolute;left:701.0px;top:524.8000000000001px;width:11px;height:11px;border-radius:50%;background:#f3c866"></div>
<div class="t" style="left:718.00px;top:522.84px;font-size:15.6px;font-weight:400;color:#4a84c4;transform:scaleX(1.0250);transform-origin:0 0;">Branding</div>
<div style="position:absolute;left:370px;top:557px;width:1468px;height:1px;background:#ececec"></div>
<svg style="position:absolute;left:438.5px;top:581.6px;" width="34" height="28" viewBox="0 0 34 28" fill="none"><rect x="1.8" y="6.2" width="29.8" height="19" rx="1.8" fill="#e6ede7" stroke="#0c6629" stroke-width="1.7"/><path d="M1 8.2 V3.2 a2.2 2.2 0 0 1 2.2 -2.2 H12.5 a2 2 0 0 1 1.6 .8 L16.6 5.4 H30.4 a2 2 0 0 1 2 2 V8.2 Z" fill="#137a3a"/></svg>
<div class="t" style="left:499.70px;top:571.46px;font-size:18.4px;font-weight:400;color:#1c1c1c;transform:scaleX(1.0635);transform-origin:0 0;">Media Kit</div>
<div class="t" style="left:499.70px;top:599.40px;font-size:16px;font-weight:400;color:#666;transform:scaleX(1.0300);transform-origin:0 0;">Uploaded by Sofia Deluca</div>
<div class="t" style="left:1398.10px;top:586.33px;font-size:17.5px;font-weight:400;color:#222;transform:scaleX(0.9928);transform-origin:0 0;">Apr 3, 2019 by Sofia Deluca</div>
<div style="position:absolute;left:370px;top:634px;width:1468px;height:1px;background:#ececec"></div>
<svg style="position:absolute;left:438.5px;top:659.5px;" width="34" height="28" viewBox="0 0 34 28" fill="none"><rect x="1.8" y="6.2" width="29.8" height="19" rx="1.8" fill="#e6ede7" stroke="#0c6629" stroke-width="1.7"/><path d="M1 8.2 V3.2 a2.2 2.2 0 0 1 2.2 -2.2 H12.5 a2 2 0 0 1 1.6 .8 L16.6 5.4 H30.4 a2 2 0 0 1 2 2 V8.2 Z" fill="#137a3a"/></svg>
<div class="t" style="left:499.70px;top:649.36px;font-size:18.4px;font-weight:400;color:#1c1c1c;transform:scaleX(1.0391);transform-origin:0 0;">Banner ads</div>
<div class="t" style="left:499.70px;top:677.30px;font-size:16px;font-weight:400;color:#666;transform:scaleX(1.0300);transform-origin:0 0;">Uploaded by Sofia Deluca</div>
<div class="t" style="left:1398.10px;top:664.23px;font-size:17.5px;font-weight:400;color:#222;transform:scaleX(0.9928);transform-origin:0 0;">Apr 3, 2019 by Sofia Deluca</div>
<svg style="position:absolute;left:696px;top:675.9px;" width="16" height="17" viewBox="0 0 16 17" fill="none"><path d="M8 2.5 C5 2.5 3.3 5 3.3 7.8 V11.5 L1.8 13.8 H14.2 L12.7 11.5 V7.8 C12.7 5 11 2.5 8 2.5 Z" stroke="#777" stroke-width="1.2" fill="none" stroke-linejoin="round"/><path d="M6.3 15.7 H9.7" stroke="#777" stroke-width="1.2"/></svg>
<div style="position:absolute;left:722.0px;top:680.6px;width:11px;height:11px;border-radius:50%;background:#9a6ed8"></div>
<div class="t" style="left:739.00px;top:678.64px;font-size:15.6px;font-weight:400;color:#4a84c4;transform:scaleX(0.9744);transform-origin:0 0;">Event essentials</div>
<div class="t" style="left:852.50px;top:678.30px;font-size:16px;font-weight:400;color:#444;">,</div>
<div style="position:absolute;left:857.5px;top:680.6px;width:11px;height:11px;border-radius:50%;background:#f3c866"></div>
<div class="t" style="left:874.70px;top:678.64px;font-size:15.6px;font-weight:400;color:#4a84c4;transform:scaleX(1.0138);transform-origin:0 0;">Branding</div>
<div style="position:absolute;left:370px;top:712px;width:1468px;height:1px;background:#ececec"></div>
<svg style="position:absolute;left:434px;top:729.3px;" width="43" height="43" viewBox="0 0 43 43" fill="none"><rect x="0" y="0" width="43" height="43" fill="#0e3a62"/><rect x="0.7" y="0.7" width="41.6" height="41.6" stroke="#06213b" stroke-width="1.4"/><path d="M20 2 L35 14" stroke="#2b5a85" stroke-width="1"/><text x="21.5" y="13" font-family="Liberation Sans" font-size="4.2" font-weight="700" fill="#d8e4f0" text-anchor="middle">INFLUENCER</text><text x="21.5" y="24" font-family="Liberation Sans" font-size="11" font-weight="700" fill="#5e7766" text-anchor="middle">101</text><rect x="17" y="17" width="9" height="14" rx="3" fill="#7d9bb8" opacity="0.8"/><text x="21.5" y="35" font-family="Liberation Sans" font-size="6.6" font-weight="700" fill="#f2f6fb" text-anchor="middle" textLength="30" lengthAdjust="spacingAndGlyphs">EPISODE 02</text><rect x="17" y="36.5" width="9" height="5" fill="#4a6f96"/></svg>
<div class="t" style="left:499.70px;top:727.26px;font-size:18.4px;font-weight:400;color:#1c1c1c;transform:scaleX(1.0550);transform-origin:0 0;">Influencer 101 - Episode 02.mp3</div>
<div class="t" style="left:499.70px;top:755.20px;font-size:16px;font-weight:400;color:#666;transform:scaleX(1.0300);transform-origin:0 0;">Uploaded by Sofia Deluca</div>
<div class="t" style="left:1398.10px;top:742.13px;font-size:17.5px;font-weight:400;color:#222;transform:scaleX(0.9835);transform-origin:0 0;">Dec 14 by Sofia Deluca</div>
<div style="position:absolute;left:370px;top:790px;width:1468px;height:1px;background:#ececec"></div>
<svg style="position:absolute;left:438.5px;top:811.3000000000001px;" width="34" height="34" viewBox="0 0 34 34" fill="none"><rect x="1.8" y="1.8" width="30.4" height="30.4" rx="2.5" stroke="#777" stroke-width="1.4" fill="#fff"/><path d="M17 2 V20 M13.5 5 H20.5 M13.5 8.5 H20.5 M13.5 12 H20.5 M13.5 15.5 H20.5" stroke="#777" stroke-width="1.3"/><rect x="13.5" y="19.5" width="7" height="6" rx="1" stroke="#777" stroke-width="1.4" fill="#fff"/></svg>
<div class="t" style="left:499.70px;top:805.16px;font-size:18.4px;font-weight:400;color:#1c1c1c;transform:scaleX(1.0807);transform-origin:0 0;">Branding Kit.zip</div>
<div class="t" style="left:499.70px;top:833.10px;font-size:16px;font-weight:400;color:#666;transform:scaleX(1.0244);transform-origin:0 0;">Uploaded by Samuel Garcia</div>
<div class="t" style="left:1398.10px;top:820.03px;font-size:17.5px;font-weight:400;color:#222;transform:scaleX(0.9944);transform-origin:0 0;">Nov 29 by Samuel Garcia</div>
<div style="position:absolute;left:370px;top:868px;width:1468px;height:1px;background:#ececec"></div>
<svg style="position:absolute;left:438.5px;top:890.2px;" width="34" height="32" viewBox="0 0 34 32" fill="none"><path d="M24.2 3.1 H3.6 a1.9 1.9 0 0 0 -1.9 1.9 V27.7 a1.9 1.9 0 0 0 1.9 1.9 H26.2 a1.9 1.9 0 0 0 1.9 -1.9 V20.2" stroke="#235e97" stroke-width="1.8" fill="none"/><path d="M32.4 5 L21.6 11.3 L32.4 17.4 Z" stroke="#235e97" stroke-width="1.8" fill="none" stroke-linejoin="round"/><path d="M7.8 11.3 H11.8 M7.8 16.4 H18.2 M7.8 21.9 H18.2" stroke="#235e97" stroke-width="1.8"/></svg>
<div class="t" style="left:499.70px;top:883.06px;font-size:18.4px;font-weight:400;color:#1c1c1c;transform:scaleX(1.0994);transform-origin:0 0;">Hybrid work model</div>
<div class="t" style="left:499.70px;top:911.00px;font-size:16px;font-weight:400;color:#666;transform:scaleX(1.0234);transform-origin:0 0;">Created by Sofia Deluca</div>
<div class="t" style="left:1398.10px;top:897.93px;font-size:17.5px;font-weight:400;color:#222;transform:scaleX(1.0082);transform-origin:0 0;">Oct 26 by Sofia Deluca</div>
<div style="position:absolute;left:370px;top:946px;width:1468px;height:1px;background:#ececec"></div>
<svg style="position:absolute;left:438.5px;top:967.1px;" width="34" height="34" viewBox="0 0 34 34" fill="none"><rect x="1.8" y="2.2" width="30" height="30.5" rx="2.2" stroke="#235e97" stroke-width="1.8" fill="#fff"/><path d="M8.6 9.6 L10 15.8 L12.6 11.2 L14.2 15.8 L17.2 9.6" stroke="#235e97" stroke-width="1.7" fill="none" stroke-linejoin="round"/><path d="M20.3 14.7 H25.3 M8.4 19.6 H25.3 M8.4 25.2 H25.3" stroke="#235e97" stroke-width="1.8"/></svg>
<div class="t" style="left:499.70px;top:960.96px;font-size:18.4px;font-weight:400;color:#1c1c1c;transform:scaleX(1.1176);transform-origin:0 0;">Monthly report.docx</div>
<div class="t" style="left:499.70px;top:988.90px;font-size:16px;font-weight:400;color:#666;transform:scaleX(1.0185);transform-origin:0 0;">Uploaded by Mia Jones</div>
<div class="t" style="left:1398.10px;top:975.83px;font-size:17.5px;font-weight:400;color:#222;transform:scaleX(0.9813);transform-origin:0 0;">Aug 22 by Mia Jones</div>
<div style="position:absolute;left:370px;top:1023px;width:1468px;height:1px;background:#ececec"></div>
<div style="position:absolute;left:434px;top:1040.4px;width:43px;height:45px;background:#fdf1b3;overflow:hidden"><div style="position:absolute;left:9px;top:7px;width:11px;height:11px;border-radius:50%;background:#fbf8ec"></div><div style="position:absolute;left:12px;top:9px;width:5px;height:5px;background:#4a7bb8;border-radius:50% 50% 0 0"></div><div style="position:absolute;left:16px;top:6px;width:3px;height:3px;border-radius:50%;background:#3b5a48"></div><div style="position:absolute;left:30px;top:13px;width:13px;height:3px;background:#2a2a2a"></div><div style="position:absolute;left:31px;top:18px;width:12px;height:2px;background:#b8a87a"></div><div style="position:absolute;left:36px;top:23px;width:8px;height:4px;background:#2f5f9a;border-radius:2px"></div><div style="position:absolute;left:0px;top:17px;width:5px;height:20px;background:#2e5d8e;clip-path:polygon(0 0,100% 0,60% 100%,0 100%)"></div><div style="position:absolute;left:6px;top:27px;width:15px;height:8px;background:#e2891c;border-radius:4px 4px 0 0"></div><div style="position:absolute;left:10px;top:29px;width:7px;height:6px;background:#fbf8ec"></div><div style="position:absolute;left:10px;top:22px;width:5px;height:6px;background:#7a2a2a;border-radius:50%"></div></div>
<div class="t" style="left:499.70px;top:1038.86px;font-size:18.4px;font-weight:400;color:#1c1c1c;transform:scaleX(1.0804);transform-origin:0 0;">We're hiring .png</div>
<div class="t" style="left:499.70px;top:1066.80px;font-size:16px;font-weight:400;color:#666;transform:scaleX(1.0300);transform-origin:0 0;">Uploaded by Sofia Deluca</div>
<div class="t" style="left:1398.10px;top:1053.72px;font-size:17.5px;font-weight:400;color:#222;transform:scaleX(0.9898);transform-origin:0 0;">Jul 26 by Sofia Deluca</div>
<svg style="position:absolute;left:951.6px;top:135px;" width="18" height="26" viewBox="0 0 18 26" fill="none"><path d="M2 1.5 V19.5 L6.5 15.3 L9.5 22.5 L12.5 21.2 L9.6 14.2 L15.5 14.2 Z" fill="#111" stroke="#fff" stroke-width="1.2" stroke-linejoin="round"/></svg>
</body></html>
